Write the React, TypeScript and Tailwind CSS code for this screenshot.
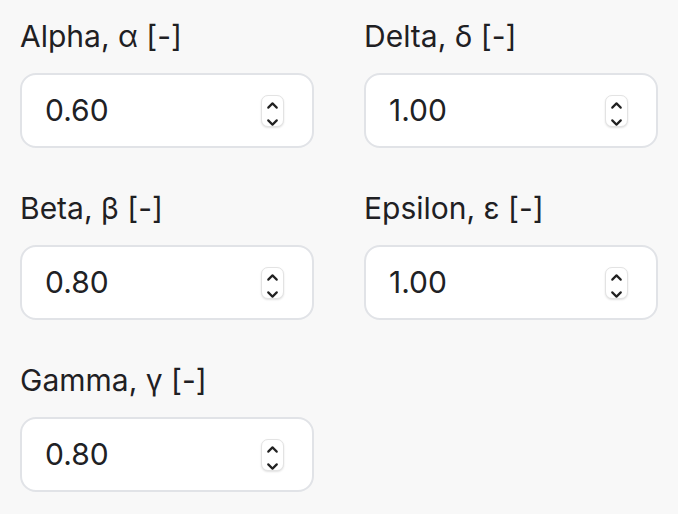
import { ChevronUp, ChevronDown } from 'lucide-react'

type Param = { label: string; value: string }

const params: Param[] = [
  { label: 'Alpha, α [-]', value: '0.60' },
  { label: 'Delta, δ [-]', value: '1.00' },
  { label: 'Beta, β [-]', value: '0.80' },
  { label: 'Epsilon, ε [-]', value: '1.00' },
  { label: 'Gamma, γ [-]', value: '0.80' },
]

function Spinner() {
  return (
    <div className="flex flex-col items-center w-[23px] h-[32px] rounded-[7px] bg-white border border-[#e3e3e3] shadow-[0_1px_2px_rgba(0,0,0,0.12)] overflow-hidden">
      <div className="flex-1 flex items-center justify-center w-full pt-px">
        <ChevronUp className="w-[17px] h-[17px] text-[#222]" strokeWidth={3} />
      </div>
      <div className="h-px w-full bg-[#d9d9d9]" />
      <div className="flex-1 flex items-center justify-center w-full pb-px">
        <ChevronDown className="w-[17px] h-[17px] text-[#222]" strokeWidth={3} />
      </div>
    </div>
  )
}

function NumberField({ label, value }: Param) {
  return (
    <div className="flex flex-col">
      <label className="text-[30px] leading-[36px] text-[#1f2023] mb-[19px]">{label}</label>
      <div className="flex items-center justify-between h-[75px] bg-white border-2 border-[#e1e3e7] rounded-[16px] pl-[23px] pr-[28px]">
        <span className="text-[30px] text-[#202124]">{value}</span>
        <Spinner />
      </div>
    </div>
  )
}

export default function App() {
  return (
    <div
      className="w-[678px] h-[514px] bg-[#f8f8f8] px-[20px] pt-[18px]"
      style={{ fontFamily: 'Inter, "Noto Sans", sans-serif' }}
    >
      <div className="grid grid-cols-[294px_294px] gap-x-[50px] gap-y-[42px]">
        {params.map((p) => (
          <NumberField key={p.label} {...p} />
        ))}
      </div>
    </div>
  )
}
